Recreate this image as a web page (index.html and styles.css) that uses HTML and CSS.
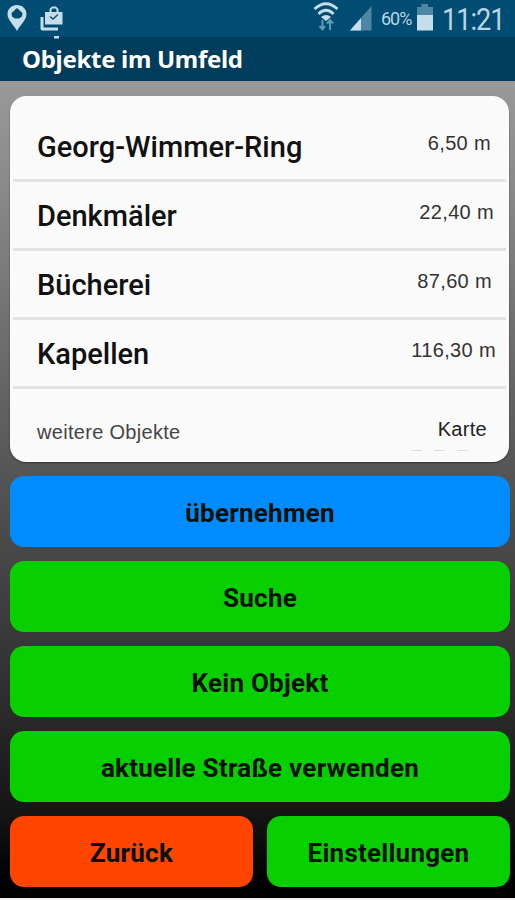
FILE: index.html
```
<!DOCTYPE html>
<html lang="de">
<head>
    <meta charset="UTF-8">
    <meta name="viewport" content="width=device-width, initial-scale=1.0">
    <title>Objekte im Umfeld</title>
    <link rel="stylesheet" href="styles.css">
</head>
<body>
    <!-- Statusleiste -->
    <div class="statusbar">
        <svg class="icon-pin" width="20" height="27" viewBox="0 0 20 27">
            <path fill-rule="evenodd" d="M10 0C4.500 0 0.500 4 0.500 9.200C0.500 15 7 20 10 26C13 20 19.500 15 19.500 9.200C19.500 4 15.500 0 10 0ZM10 3L15.500 8L15 11.500L12 13.500H8L5 11.500L4.500 8Z"/>
        </svg>
        <svg class="icon-bag" width="24" height="36" viewBox="0 0 24 36">
            <path d="M0.500 12H3.500V22.500H18V25.500H2.500Q0.500 25.500 0.500 23.500Z"/>
            <path fill-rule="evenodd" d="M5 7H9.500V4L12 1.500H16L18.500 4V7H22.500V19.500H5ZM11.500 7H16.500V4.500L15.500 3.500H12.500L11.500 4.500Z"/>
            <path class="check" d="M10 11.500L13 14L18 9.500"/>
            <rect x="14" y="31" width="5" height="2.500"/>
        </svg>
        <div class="status-right">
            <svg class="icon-wifi" width="26" height="30" viewBox="0 0 26 30">
                <path class="arc" d="M1.500 7Q13 -3.500 24.500 7M5.500 12Q13 4.500 20.500 12"/>
                <path d="M8 15Q13 11 18 15L13 19Z"/>
                <path class="arrows" d="M9.500 18V28M6.500 24L9.500 27.500L12 24M17 28V18M14 21.500L17 18L20 21.500"/>
            </svg>
            <svg class="icon-signal" width="22" height="25" viewBox="0 0 22 25">
                <path class="dim" d="M0 24.500L21.500 0V24.500Z"/>
                <path d="M0 24.500L11 12V24.500Z"/>
            </svg>
            <span class="percent">60%</span>
            <svg class="icon-battery" width="16" height="27" viewBox="0 0 16 27">
                <path class="dim" d="M0 3H4.500V0H11V3H16V12H0Z"/>
                <rect y="11" width="16" height="15.500"/>
            </svg>
            <span class="clock">11:21</span>
        </div>
    </div>

    <header>
        <h1>Objekte im Umfeld</h1>
    </header>

    <main class="container">
        <!-- Liste der Objekte -->
        <div class="card">
            <div class="row row-first">
                <span class="name">Georg-Wimmer-Ring</span>
                <span class="distance distance-1">6,50 m</span>
            </div>
            <div class="row">
                <span class="name">Denkmäler</span>
                <span class="distance distance-2">22,40 m</span>
            </div>
            <div class="row">
                <span class="name">Bücherei</span>
                <span class="distance distance-3">87,60 m</span>
            </div>
            <div class="row">
                <span class="name">Kapellen</span>
                <span class="distance distance-4">116,30 m</span>
            </div>
            <div class="row row-more">
                <span class="more">weitere Objekte</span>
                <span class="map">Karte</span>
            </div>
            <div class="dashes"><i></i><i></i><i></i></div>
        </div>

        <!-- Aktionen -->
        <button class="btn btn-blue">übernehmen</button>
        <button class="btn">Suche</button>
        <button class="btn">Kein Objekt</button>
        <button class="btn">aktuelle Straße verwenden</button>
        <div class="btn-pair">
            <button class="btn btn-red">Zurück</button>
            <button class="btn">Einstellungen</button>
        </div>
    </main>
</body>
</html>
```

FILE: styles.css
```
* {
    box-sizing: border-box;
}
body {
    margin: 0;
    width: 515px;
    height: 900px;
    overflow: hidden;
    font-family: Roboto, sans-serif;
    background-color: #f4eef0;
}
.statusbar {
    display: flex;
    align-items: flex-start;
    height: 37px;
    padding-left: 7px;
    background-color: #004c73;
    fill: #c5deeb;
    color: #b9d5e4;
}
.icon-pin {
    margin-top: 5px;
}
.icon-bag {
    margin: 5px 0 0 13px;
}
.check {
    fill: none;
    stroke: #214f68;
    stroke-width: 1.5;
}
.status-right {
    display: flex;
    margin-left: auto;
    padding-right: 11px;
}
.icon-wifi {
    margin-top: 2px;
}
.arc {
    fill: none;
    stroke: #c5deeb;
    stroke-width: 2.8;
}
.arrows {
    fill: none;
    stroke: #5b9ab8;
    stroke-width: 2;
}
.dim {
    fill: #4d87a2;
}
.icon-signal {
    margin: 6px 0 0 11px;
}
.percent {
    width: 32px;
    margin: 9px 0 0 9px;
    font-size: 18px;
    line-height: 20px;
    letter-spacing: -1px;
}
.icon-battery {
    margin: 4px 0 0 4px;
}
.clock {
    width: 62px;
    margin: 2px 0 0 9px;
    font-size: 32px;
    line-height: 35px;
    letter-spacing: -1.2px;
    white-space: nowrap;
    transform: scaleX(0.85);
    transform-origin: left;
}
header {
    height: 44px;
    padding-left: 22px;
    background-color: #003d5c;
}
h1 {
    margin: 0;
    font-family: "Noto Sans", sans-serif;
    font-size: 24px;
    font-weight: 700;
    line-height: 43px;
    letter-spacing: -0.3px;
    color: #fff;
}
.container {
    display: flex;
    flex-direction: column;
    gap: 14px;
    height: 817px;
    padding: 15px 5px 0 10px;
    background: linear-gradient(#999 0, #8b8b8b 12%, #555 48%, #333 72%, #141414 90%, #000 98%);
}
.card {
    position: relative;
    width: 499px;
    height: 366px;
    padding: 0 3px;
    background-color: #fafafa;
    border-radius: 16px;
    box-shadow: 0 1px 2px rgba(0, 0, 0, 0.4);
}
.row {
    display: flex;
    justify-content: space-between;
    height: 69px;
    padding: 18px 0 0 24px;
    border-bottom: 3px solid #e3e3e3;
}
.row-first {
    height: 86px;
    padding-top: 35px;
}
.name {
    font-size: 29px;
    font-weight: 500;
    line-height: 32px;
    color: #111;
}
.distance {
    padding-top: 1px;
    font-family: "Liberation Sans", Arial, sans-serif;
    font-size: 20px;
    line-height: 22px;
    letter-spacing: 0.35px;
    color: #333;
}
.distance-1 {
    padding-right: 15px;
}
.distance-2 {
    padding-right: 12px;
}
.distance-3 {
    padding-right: 14px;
}
.distance-4 {
    padding-right: 10px;
}
.row-more {
    height: 72px;
    padding-top: 28px;
    border-bottom: none;
    font-family: "Liberation Sans", Arial, sans-serif;
    font-size: 20px;
    line-height: 24px;
    letter-spacing: 0.3px;
}
.more {
    padding-top: 3px;
    color: #444;
}
.map {
    padding-right: 19px;
    color: #222;
}
.dashes {
    position: absolute;
    right: 41px;
    bottom: 11px;
    display: flex;
    gap: 12px;
}
.dashes i {
    width: 11px;
    height: 1px;
    background-color: #ddd;
}
.btn {
    flex: none;
    width: 500px;
    height: 71px;
    padding: 2px 0 0;
    border: none;
    border-radius: 14px;
    background-color: #08d000;
    color: #051005;
    font-family: Roboto, sans-serif;
    font-size: 26px;
    font-weight: 700;
    letter-spacing: 0.25px;
}
.btn-blue {
    background-color: #008cff;
}
.btn-red {
    background-color: #ff4500;
}
.btn-pair {
    display: flex;
    gap: 14px;
}
.btn-pair .btn {
    width: 243px;
}
```
